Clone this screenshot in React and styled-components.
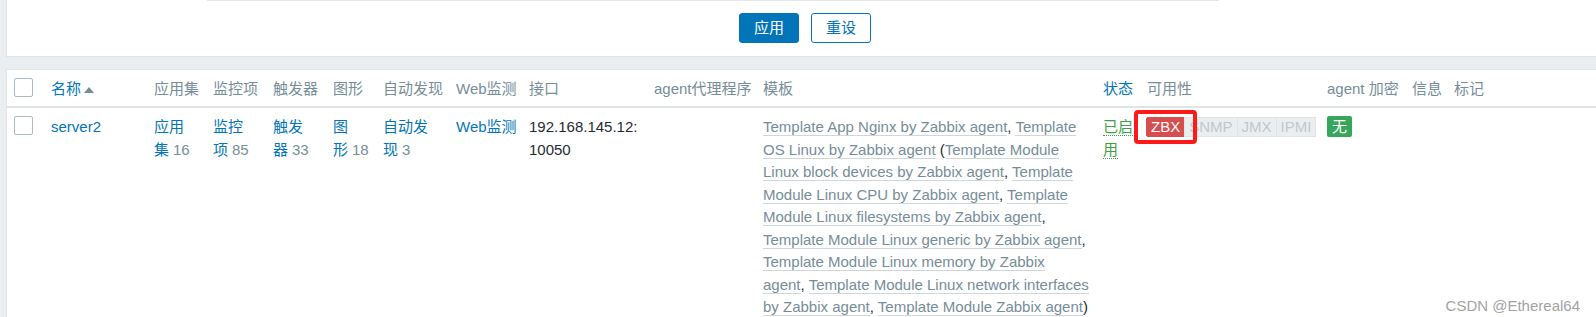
import React from 'react';
import styled, { createGlobalStyle, css } from 'styled-components';

const Global = createGlobalStyle`
  html, body { margin: 0; padding: 0; background: #ebeef0; }
  body {
    font-family: "Liberation Sans", "Noto Sans CJK SC", sans-serif;
    font-size: 15px;
    line-height: 22.5px;
    color: #1f2c33;
  }
  * { box-sizing: border-box; }
`;

const Page = styled.div`
  position: relative;
  padding-left: 6px;
  min-height: 317px;
`;

const FilterPanel = styled.section`
  background: #fff;
  border-left: 1px solid #dfe4e7;
  border-bottom: 1px solid #dfe4e7;
  height: 57px;
`;

const FilterEdge = styled.div`
  height: 1px;
  width: 1012px;
  margin-left: 200px;
  background: #e3e7ea;
`;

const ButtonRow = styled.div`
  display: flex;
  justify-content: center;
  gap: 12px;
  margin-top: 12px;
  padding-left: 7px;
`;

const Button = styled.button`
  width: 60px;
  height: 30px;
  border-radius: 3px;
  font-family: inherit;
  font-size: 15px;
  line-height: 22px;
  padding: 0;
  cursor: pointer;
  border: 1px solid #0275b8;
  background: ${(p) => (p.$primary ? '#0275b8' : '#fff')};
  color: ${(p) => (p.$primary ? '#fff' : '#0275b8')};
`;

const TablePanel = styled.section`
  margin-top: 12px;
  background: #fff;
  border-left: 1px solid #dfe4e7;
  border-top: 1px solid #dfe4e7;
`;

const columns = css`
  display: grid;
  grid-template-columns: 44px 103px 59px 60px 60px 50px 73px 73px 125px 109px 340px 44px 180px 85px 42px 1fr;
`;

const HeaderRow = styled.div`
  ${columns};
  height: 38px;
  border-bottom: 2px solid #dfe4e7;
`;

const HeadCell = styled.div`
  padding-top: 8px;
  padding-left: ${(p) => (p.$first ? '7px' : '0')};
  white-space: nowrap;
  color: ${(p) => (p.$link ? '#0275b8' : '#768d99')};
  display: flex;
  align-items: flex-start;
`;

const SortArrow = styled.span`
  display: inline-block;
  width: 0;
  height: 0;
  margin: 9px 0 0 3px;
  border-left: 5px solid transparent;
  border-right: 5px solid transparent;
  border-bottom: 6px solid #768d99;
`;

const DataRow = styled.div`
  ${columns};
  border-bottom: 1px solid #ebeef0;
`;

const Cell = styled.div`
  padding-top: 8px;
  padding-bottom: 8px;
  padding-left: ${(p) => (p.$first ? '7px' : '0')};
  padding-right: ${(p) => (p.$pr ? `${p.$pr}px` : '0')};
  ${(p) => p.$breakAll && 'word-break: break-all;'}
`;

const Checkbox = styled.span`
  display: block;
  width: 19px;
  height: 19px;
  border: 1px solid #acbbc2;
  border-radius: 2px;
  background: #fff;
`;

const Link = styled.a`
  color: #0275b8;
  text-decoration: none;
  cursor: pointer;
`;

const Keep = styled.span`
  white-space: nowrap;
`;

const Count = styled.span`
  color: #768d99;
  margin-left: 4px;
`;

const TemplateLink = styled.a`
  color: #768d99;
  text-decoration: none;
  border-bottom: 1px solid #cfd7db;
  cursor: pointer;
`;

const StatusLink = styled.a`
  color: #429e47;
  text-decoration: none;
  border-bottom: 1px dotted #429e47;
  cursor: pointer;
`;

const BadgeGroup = styled.div`
  position: relative;
  display: inline-flex;
  margin-left: -1px;
`;

const Badge = styled.span`
  height: 20px;
  line-height: 18px;
  padding: 0 4px;
  font-size: 15px;
  border: 1px solid ${(p) => (p.$on ? '#d64e4e' : '#dfe4e7')};
  background: ${(p) => (p.$on ? '#d64e4e' : '#ebeef0')};
  color: ${(p) => (p.$on ? '#fff' : '#bfc8cc')};
  & + & { margin-left: -1px; }
  &:first-child { border-radius: 2px 0 0 2px; }
  &:last-child { border-radius: 0 2px 2px 0; }
`;

const Highlight = styled.span`
  position: absolute;
  left: -12px;
  top: -7px;
  width: 63px;
  height: 34px;
  border: 4px solid #ff1a1a;
  border-radius: 4px;
  pointer-events: none;
`;

const EncBadge = styled.span`
  display: inline-block;
  height: 21px;
  line-height: 21px;
  padding: 0 5px;
  border-radius: 2px;
  background: #36a75a;
  color: #fff;
`;

const Watermark = styled.div`
  position: absolute;
  top: 295px;
  right: 16px;
  font-size: 15px;
  color: #a3a3a3;
  pointer-events: none;
`;

const headers = [
  { label: '' },
  { label: '名称', link: true, sort: true },
  { label: '应用集' },
  { label: '监控项' },
  { label: '触发器' },
  { label: '图形' },
  { label: '自动发现' },
  { label: 'Web监测' },
  { label: '接口' },
  { label: 'agent代理程序' },
  { label: '模板' },
  { label: '状态', link: true },
  { label: '可用性' },
  { label: 'agent 加密' },
  { label: '信息' },
  { label: '标记' },
];

const templates = [
  ['Template App Nginx by Zabbix agent', ', '],
  ['Template OS Linux by Zabbix agent', ' ('],
  ['Template Module Linux block devices by Zabbix agent', ', '],
  ['Template Module Linux CPU by Zabbix agent', ', '],
  ['Template Module Linux filesystems by Zabbix agent', ', '],
  ['Template Module Linux generic by Zabbix agent', ', '],
  ['Template Module Linux memory by Zabbix agent', ', '],
  ['Template Module Linux network interfaces by Zabbix agent', ', '],
  ['Template Module Zabbix agent', ')'],
];

function Entity({ label, count }) {
  return (
    <>
      <Link>{label.slice(0, -1)}</Link>
      <Keep>
        <Link>{label.slice(-1)}</Link>
        <Count>{count}</Count>
      </Keep>
    </>
  );
}

export default function App() {
  return (
    <Page>
      <Global />
      <FilterPanel>
        <FilterEdge />
        <ButtonRow>
          <Button $primary>应用</Button>
          <Button>重设</Button>
        </ButtonRow>
      </FilterPanel>

      <TablePanel>
        <HeaderRow>
          {headers.map((h, i) => (
            <HeadCell key={i} $first={i === 0} $link={h.link}>
              {i === 0 ? <Checkbox /> : h.label}
              {h.sort && <SortArrow />}
            </HeadCell>
          ))}
        </HeaderRow>

        <DataRow>
          <Cell $first>
            <Checkbox />
          </Cell>
          <Cell>
            <Link>server2</Link>
          </Cell>
          <Cell $pr={19}>
            <Entity label="应用集" count="16" />
          </Cell>
          <Cell $pr={20}>
            <Entity label="监控项" count="85" />
          </Cell>
          <Cell $pr={20}>
            <Entity label="触发器" count="33" />
          </Cell>
          <Cell $pr={14}>
            <Entity label="图形" count="18" />
          </Cell>
          <Cell $pr={23}>
            <Entity label="自动发现" count="3" />
          </Cell>
          <Cell>
            <Link>Web监测</Link>
          </Cell>
          <Cell $pr={13} $breakAll>
            192.168.145.12:10050
          </Cell>
          <Cell />
          <Cell $pr={14}>
            {templates.map(([name, sep], i) => (
              <React.Fragment key={i}>
                <TemplateLink>{name}</TemplateLink>
                {sep}
              </React.Fragment>
            ))}
          </Cell>
          <Cell $pr={4}>
            <StatusLink>已启用</StatusLink>
          </Cell>
          <Cell>
            <BadgeGroup>
              <Badge $on>ZBX</Badge>
              <Badge>SNMP</Badge>
              <Badge>JMX</Badge>
              <Badge>IPMI</Badge>
              <Highlight />
            </BadgeGroup>
          </Cell>
          <Cell>
            <EncBadge>无</EncBadge>
          </Cell>
          <Cell />
          <Cell />
        </DataRow>
      </TablePanel>

      <Watermark>CSDN @Ethereal64</Watermark>
    </Page>
  );
}
